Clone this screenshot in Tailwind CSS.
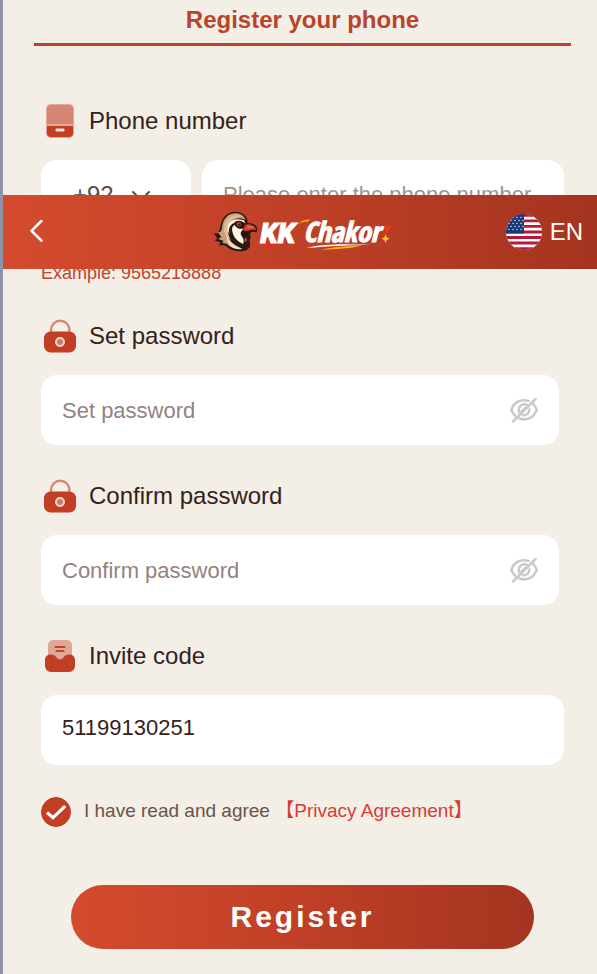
<!DOCTYPE html>
<html lang="en">
<head>
<meta charset="utf-8">
<meta name="viewport" content="width=device-width, initial-scale=1">
<title>KK Chakor - Register</title>
<script src="https://cdn.jsdelivr.net/npm/@tailwindcss/browser@4"></script>
</head>
<body class="bg-[#f3eee6] font-['Liberation_Sans',Arial,'Noto_Sans_CJK_SC',sans-serif] text-[#35211a]">
<div class="relative min-h-screen border-l-3 border-[#8f93a7]">

  <header class="absolute inset-x-0 top-[195px] z-10 grid h-[74px] grid-cols-[1fr_auto_1fr] items-center bg-linear-to-r from-[#d44b2e] via-[#bf4026] to-[#a43420] pr-3.5 pl-[22px] text-white">
    <button type="button" aria-label="Back" class="flex h-10 w-6 items-center">
      <svg class="h-6 w-6" viewBox="0 0 24 24" fill="none" stroke="currentColor" stroke-width="2.6" stroke-linecap="round" stroke-linejoin="round"><path d="M16.500 0.800 6.500 10.800l10 9.800"/></svg>
    </button>
    <a href="#" aria-label="KK Chakor">
      <svg class="h-12 w-[180px]" viewBox="42 39 540 144" overflow="visible">
        <g transform="translate(30 33)">
          <path d="M32 58C36 34 54 17 76 17c18 0 31 9 36 24l1 10c14 0 26 6 29 18l-2 10-8-2-9 2c-3 5-4 9-1 14l-3 12c2 8 2 16-2 21-6 8-19 11-31 10-17-1-32-8-42-18l-19 0 7-8-18-7 8-5-11-17 11 2c5-6 8-13 10-25z" fill="#2b1a14"/>
          <path d="M37 58c4-22 20-36 39-36 16 0 27 8 31 20-16-9-33-6-44 5-14 14-16 34-5 54l18 26c-11-2-19-7-26-14l-12-2 2-7-15-5 9-6-10-14 8-2c4-6 4-12 5-19z" fill="#c99f78"/>
          <path d="M42 60c4-17 17-31 33-33 8-1 16 1 22 6-21 0-36 10-41 27-4 15-1 29 6 42-16-10-23-25-20-42z" fill="#dfba92"/>
          <path d="M55 55c7-13 24-20 47-12l4 9-9-3c-13-3-26-1-34 8-7 8-8 17-4 27-7-8-9-19-4-29z" fill="#fff5e6"/>
          <path d="M67 64c2-4 6-7 10-8l3 7c5 5 12 6 21 4-5 8-11 11-8 20l7 11c2 6 1 12-1 16-14-7-25-16-29-28-3-8-5-15-3-22z" fill="#fff5e6"/>
          <path d="M75 47c9-5 19-4 28 3l-3 16c-8 3-16 2-22-4-4-4-5-10-3-15z" fill="#281510"/>
          <circle cx="87" cy="55" r="7" fill="#b5392a"/><circle cx="88" cy="55" r="3.500" fill="#180d0a"/><circle cx="86" cy="53" r="1.500" fill="#fff"/>
          <path d="M50 88c7 16 19 28 37 36l10 5c-15 3-29-1-38-11-7-8-10-19-9-30z" fill="#f3dcc1"/>
          <path d="M103 60c5-5 12-6 19-4 9 2 15 7 16 17-9-3-17-1-25 2l-12-1z" fill="#dc3b2c"/>
          <path d="M112 60c9-1 17 2 21 7-7-2-14-3-20-2z" fill="#f37a61"/>
          <path d="M101 76l13 2-4 8 2 6-7 3c-5-5-7-11-4-19z" fill="#25130e"/>
          <path d="M108 94l3 4-1 8-5 3-2-8z" fill="#dc3b2c"/>
        </g>
        <path d="M172 153l31-15 9 9 33 1-31 7-19-1z" fill="#e62e21"/>
        <path d="M296 87l10-10 25-5-13 13 3-6-14 3z" fill="#f6a51d"/>
        <path d="M549 96l28-4-14 20-11 6 6-13z" fill="#ee3824"/>
        <g fill="#fff" stroke="#fff" stroke-width="3" font-weight="700" font-style="italic">
          <text x="181" y="143" font-size="84" font-family="Roboto, sans-serif" font-weight="900">KK</text>
          <text x="310" y="141" font-size="84" font-family="'Liberation Sans Narrow', 'Open Sans Condensed', Roboto, sans-serif">Chakor</text>
        </g>
        <path d="M320 159c56-15 130-11 195-10-70 2-130 4-195 10z" fill="#fff"/>
        <path d="M363 165c36-10 81-11 124-14-34 11-77 11-124 14z" fill="#ffad20"/>
        <path d="M557 118l3 9 9 4-9 4-3 10-4-10-8-4 8-4z" fill="#ffc12b"/>
      </svg>
    </a>
    <button type="button" class="flex items-center gap-2 justify-self-end text-2xl">
      <svg class="h-9 w-9" viewBox="0 0 36 36" aria-hidden="true">
        <defs><clipPath id="flag"><circle cx="18" cy="18" r="18"/></clipPath></defs>
        <g clip-path="url(#flag)">
          <path fill="#fff" d="M0 0h36v36H0z"/>
          <path stroke="#b8173a" stroke-width="2.800" d="M0 1.400h36M0 6.900h36M0 12.400h36M0 18h36M0 23.500h36M0 29h36M0 34.600h36"/>
          <path fill="#173a78" d="M0 0h18v19.400H0z"/>
          <path stroke="#fff" stroke-width="1.300" stroke-linecap="round" stroke-dasharray="0 4" d="M3 3.500h15M1 6.500h17M3 9.500h15M1 12.500h17M3 15.500h15"/>
        </g>
      </svg>
      <span>EN</span>
    </button>
  </header>

  <main>
    <h1 class="mr-[26px] ml-[31px] border-b-3 border-[#b9432b] pt-1 pb-[7px] text-center text-2xl font-bold text-[#b9432b]">Register your phone</h1>

    <form class="pt-[55px] pr-[33px] pb-6 pl-[38px]">
      <div class="flex h-10 items-center gap-2.5">
        <svg class="h-[38px] w-[38px]" viewBox="0 0 38 38" aria-hidden="true">
          <rect x="5" y="2" width="28" height="34" rx="5" fill="#e2a797"/><path d="M6 22V7a4 4 0 0 1 4-4h18a4 4 0 0 1 4 4v15z" fill="#d48774"/><path d="M6 24h26v7a4 4 0 0 1-4 4H10a4 4 0 0 1-4-4z" fill="#c23e24"/><rect x="14.500" y="26.500" width="9" height="3" rx="1" fill="#f6dfd3"/>
        </svg>
        <label for="phone" class="text-2xl">Phone number</label>
      </div>
      <div class="mt-[19px] flex gap-[11px]">
        <div class="relative w-[150px] shrink-0">
          <select aria-label="Country code" class="h-[70px] w-full appearance-none rounded-2xl bg-white pl-8 text-2xl text-[#5e4a42]"><option>+92</option></select>
          <svg class="pointer-events-none absolute top-[26px] right-10 h-5 w-5" viewBox="0 0 20 20" fill="none" stroke="#5e4a42" stroke-width="2" stroke-linecap="round"><path d="m2 6 8 8 8-8"/></svg>
        </div>
        <input id="phone" type="tel" placeholder="Please enter the phone number" class="h-[70px] min-w-0 flex-1 rounded-2xl bg-white px-[21px] text-[22px] placeholder:text-[#a1938d]">
      </div>
      <p class="mt-[31px] text-lg leading-6 text-[#c2452d]">Example: 9565218888</p>

      <div class="mt-[31px] flex h-10 items-center gap-2.5">
        <svg class="h-[38px] w-[38px]" viewBox="0 0 38 38" aria-hidden="true">
          <path d="M10 15v-2a9.200 9.200 0 0 1 18.400 0v2" fill="none" stroke="#d48774" stroke-width="2.400"/><rect x="3" y="14.500" width="32" height="21" rx="6.500" fill="#c23e24"/><circle cx="19" cy="25" r="5" fill="#f5d9cc"/><circle cx="19" cy="25" r="3" fill="#d07a66"/>
        </svg>
        <label for="password" class="text-2xl">Set password</label>
      </div>
      <div class="mt-[19px] mr-[5px] flex h-[70px] items-center rounded-2xl bg-white pr-5 pl-[21px]">
        <input id="password" type="password" placeholder="Set password" class="min-w-0 flex-1 text-[22px] outline-none placeholder:text-[#94837d]">
        <button type="button" aria-label="Show password"><svg class="h-[30px] w-[30px]" viewBox="0 0 30 30" fill="none" stroke="#c9c9c9" stroke-width="2.500" stroke-linecap="round"><path d="M19.500 6A15 15 0 0 0 15 5.300C8.500 5.300 4.300 9 2.200 14.800c1 2.700 2.300 4.700 4.200 6.300M23.700 8.500c1.900 1.600 3.200 3.600 4.100 6.300C25.700 20.600 21.500 24.300 15 24.300c-1.700 0-3.200-.300-4.600-.800M18 10a5.500 5.500 0 0 0-7.300 7.700M20.400 14.500a5.500 5.500 0 0 1-6.400 5.700M16.200 13l-3.600 3.700M26.500 4 4 26.500"/></svg></button>
      </div>

      <div class="mt-[31px] flex h-10 items-center gap-2.5">
        <svg class="h-[38px] w-[38px]" viewBox="0 0 38 38" aria-hidden="true">
          <path d="M10 15v-2a9.200 9.200 0 0 1 18.400 0v2" fill="none" stroke="#d48774" stroke-width="2.400"/><rect x="3" y="14.500" width="32" height="21" rx="6.500" fill="#c23e24"/><circle cx="19" cy="25" r="5" fill="#f5d9cc"/><circle cx="19" cy="25" r="3" fill="#d07a66"/>
        </svg>
        <label for="confirm" class="text-2xl">Confirm password</label>
      </div>
      <div class="mt-[19px] mr-[5px] flex h-[70px] items-center rounded-2xl bg-white pr-5 pl-[21px]">
        <input id="confirm" type="password" placeholder="Confirm password" class="min-w-0 flex-1 text-[22px] outline-none placeholder:text-[#94837d]">
        <button type="button" aria-label="Show password confirmation"><svg class="h-[30px] w-[30px]" viewBox="0 0 30 30" fill="none" stroke="#c9c9c9" stroke-width="2.500" stroke-linecap="round"><path d="M19.500 6A15 15 0 0 0 15 5.300C8.500 5.300 4.300 9 2.200 14.800c1 2.700 2.300 4.700 4.200 6.300M23.700 8.500c1.900 1.600 3.200 3.600 4.100 6.300C25.700 20.600 21.500 24.300 15 24.300c-1.700 0-3.200-.300-4.600-.800M18 10a5.500 5.500 0 0 0-7.300 7.700M20.400 14.500a5.500 5.500 0 0 1-6.400 5.700M16.200 13l-3.600 3.700M26.500 4 4 26.500"/></svg></button>
      </div>

      <div class="mt-[31px] flex h-10 items-center gap-2.5">
        <svg class="h-[38px] w-[38px]" viewBox="0 0 38 38" aria-hidden="true">
          <rect x="7" y="3" width="24" height="27" rx="5" fill="#e2a797"/><path d="M14.500 10h9M15.500 14h7" stroke="#bd452e" stroke-width="2" stroke-linecap="round"/><path d="M4 23c0-6 8-7 11-3l1.500 1.500q2.500 2.200 5 0L23 20c3-4 11-3 11 3v6a6 6 0 0 1-6 6H10a6 6 0 0 1-6-6z" fill="#c23e24"/>
        </svg>
        <label for="invite" class="text-2xl">Invite code</label>
      </div>
      <input id="invite" type="text" value="51199130251" class="mt-[19px] block h-[70px] w-full rounded-2xl bg-white px-[21px] pb-1 text-[22px]">

      <div class="mt-8 flex items-start gap-[13px] text-[19px] leading-7">
        <span class="grid h-[30px] w-[30px] shrink-0 place-items-center">
          <input id="agree" type="checkbox" checked class="peer col-start-1 row-start-1 h-[30px] w-[30px] appearance-none rounded-full border border-[#c23e24] checked:bg-[#c23e24]">
          <svg class="pointer-events-none invisible col-start-1 row-start-1 h-[30px] w-[30px] peer-checked:visible" viewBox="0 0 30 30" fill="none" stroke="#fff" stroke-width="3.200"><path d="m6 15.500 6 5.200L24.200 9.200"/></svg>
        </span>
        <p class="text-[#6a534a]"><label for="agree">I have read and agree</label> <a href="#" class="text-[#d93b35]">【Privacy Agreement】</a></p>
      </div>

      <button type="submit" class="mx-[30px] mt-[58px] flex h-16 w-[calc(100%-60px)] items-center justify-center rounded-full bg-linear-to-r from-[#d44b2e] via-[#bf4026] to-[#a43420] pb-px text-3xl font-bold tracking-widest text-white">Register</button>
    </form>
  </main>
</div>
</body>
</html>
